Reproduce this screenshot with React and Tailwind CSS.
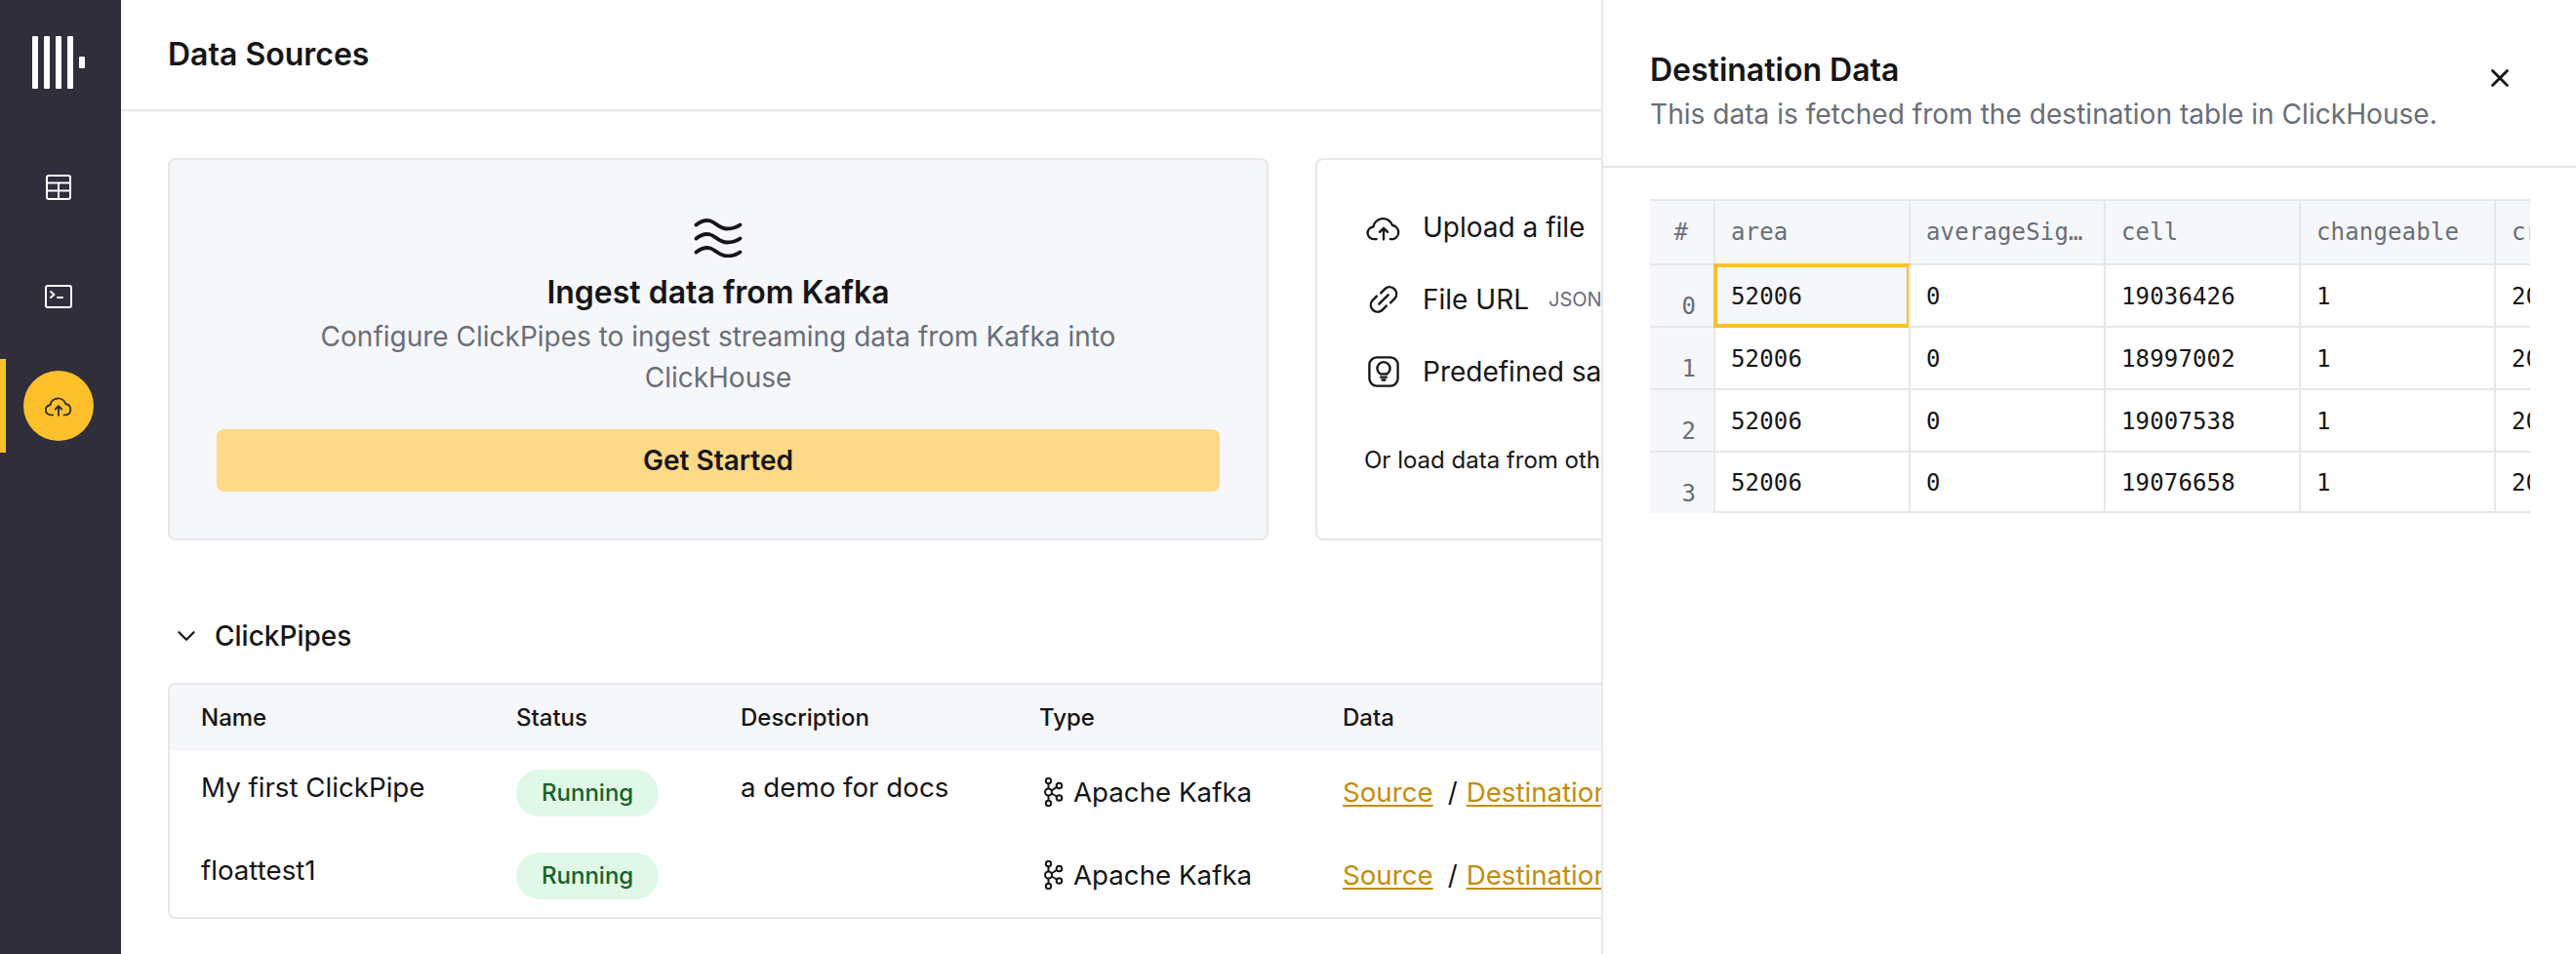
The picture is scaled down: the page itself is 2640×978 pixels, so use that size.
import React from "react";
import { ChevronDown, X } from "lucide-react";

const SANS = "font-['Inter','Liberation_Sans',sans-serif]";
const MONO = "font-['DejaVu_Sans_Mono','Liberation_Mono',monospace]";

const CloudUp = ({ className }) => (
  <svg viewBox="0 0 36 28" fill="none" stroke="currentColor" strokeWidth="2.4" strokeLinecap="round" strokeLinejoin="round" className={className}>
    <path d="M10.500 26H8a6.500 6.500 0 0 1-1-13 10.500 10.500 0 0 1 20.300-1.600A7.500 7.500 0 0 1 28.500 26H25" />
    <path d="M18 26.500V14.500M13.800 18.500l4.200-4.200 4.200 4.200" />
  </svg>
);

const TableIcon = () => (
  <svg viewBox="0 0 26 26" fill="none" stroke="#fff" strokeWidth="2" className="w-[26px] h-[26px]">
    <rect x="1" y="1" width="24" height="24" rx="2" />
    <path d="M1 8.500h24M1 16.500h24M13 8.500V25" />
  </svg>
);

const TerminalIcon = () => (
  <svg viewBox="0 0 28 24" fill="none" stroke="#fff" strokeWidth="2" strokeLinecap="round" strokeLinejoin="round" className="w-[28px] h-[24px]">
    <rect x="1" y="1" width="26" height="22" rx="2" />
    <path d="M6 7l3.500 3L6 13M13 13h5" />
  </svg>
);

const Logo = () => (
  <svg viewBox="0 0 54 54" fill="#fff" className="w-[54px] h-[54px]">
    <rect x="0" y="0" width="6" height="54" rx="1" />
    <rect x="12" y="0" width="6" height="54" rx="1" />
    <rect x="24" y="0" width="6" height="54" rx="1" />
    <rect x="36" y="0" width="6" height="54" rx="1" />
    <rect x="48" y="21" width="6" height="12" rx="1" />
  </svg>
);

const Waves = () => (
  <svg viewBox="0 0 50 40" fill="none" stroke="#161517" strokeWidth="3.800" strokeLinecap="round" className="w-[50px] h-[40px]">
    <path d="M2.500 6.500C7 3 12 1 17 2.500S27 10.500 34 10.500 44 9 47.500 6.500" />
    <path d="M2.500 20.500C7 17 12 15 17 16.500S27 24.500 34 24.500 44 23 47.500 20.500" />
    <path d="M2.500 34.500C7 31 12 29 17 30.500S27 38.500 34 38.500 44 37 47.500 34.500" />
  </svg>
);

const LinkIcon = () => (
  <svg viewBox="0 0 34 34" fill="none" stroke="#161517" strokeWidth="2.500" strokeLinecap="round" strokeLinejoin="round" className="w-8 h-8">
    <path d="M14 10l5-5a7.500 7.500 0 0 1 10.500 10.500l-5 5" />
    <path d="M20 24l-5 5A7.500 7.500 0 0 1 4.500 18.500l5-5" />
    <path d="M12 22l10-10" />
  </svg>
);

const BulbIcon = () => (
  <svg viewBox="0 0 34 34" fill="none" stroke="#161517" strokeWidth="2.500" strokeLinecap="round" strokeLinejoin="round" className="w-8 h-8">
    <rect x="1.500" y="1.500" width="31" height="31" rx="8" />
    <path d="M13.500 19.500a7 7 0 1 1 7 0" />
    <path d="M13.500 19.500h7M14 23h6M15.500 26h3" />
  </svg>
);

const KafkaIcon = () => (
  <svg viewBox="0 0 20 30" fill="none" stroke="#161517" strokeWidth="2" className="w-[20px] h-[30px] shrink-0">
    <circle cx="4.500" cy="3.500" r="2.700" />
    <circle cx="4.500" cy="15" r="3.500" />
    <circle cx="4.500" cy="26.500" r="2.700" />
    <circle cx="15.500" cy="8.500" r="2.800" />
    <circle cx="15.500" cy="21" r="2.800" />
    <path d="M4.500 6.200v5.300M4.500 18.500v5.300M7.600 13.500l5.400-3.600M7.600 16.500l5.400 3" />
  </svg>
);

const Badge = () => (
  <span className="inline-flex items-center h-12 px-[26px] rounded-3xl bg-[#e0f8e7] text-[#14632b] text-2xl font-medium">
    Running
  </span>
);

const pipes = [
  { name: "My first ClickPipe", description: "a demo for docs" },
  { name: "floattest1", description: "" },
];

const columns = [
  { key: "area", label: "area" },
  { key: "avg", label: "averageSignalRange" },
  { key: "cell", label: "cell" },
  { key: "changeable", label: "changeable" },
  { key: "created", label: "created" },
];

const rows = [
  { area: 52006, avg: 0, cell: 19036426, changeable: 1, created: "2021-03-04" },
  { area: 52006, avg: 0, cell: 18997002, changeable: 1, created: "2021-03-04" },
  { area: 52006, avg: 0, cell: 19007538, changeable: 1, created: "2021-03-04" },
  { area: 52006, avg: 0, cell: 19076658, changeable: 1, created: "2021-03-04" },
];

const DataTable = () => (
  <div className={`mx-[50px] w-[902px] h-[322px] overflow-hidden border-t-2 border-[#e6e7e9] ${MONO} text-2xl tracking-[0.15px]`}>
    <div className="flex h-[66px] bg-[#f6f7fa] border-b-2 border-[#e6e7e9] text-[#696e79]">
      <div className="w-[65px] shrink-0 flex items-center justify-end pr-[26px]">#</div>
      {columns.map((c) => (
        <div key={c.key} className="w-[200px] shrink-0 flex items-center px-4 border-l-2 border-[#e6e7e9]">
          <span className="truncate">{c.label}</span>
        </div>
      ))}
    </div>
    {rows.map((row, i) => (
      <div key={i} className={`flex ${i === 3 ? "h-[62px]" : "h-16"}`}>
        <div className={`w-[65px] shrink-0 flex items-end justify-end pr-[18px] pb-1 bg-[#f6f7fa] text-[#696e79] ${i === 3 ? "" : "border-b-2 border-[#e6e7e9]"}`}>{i}</div>
        {columns.map((c, j) => (
          <div
            key={c.key}
            className={`relative w-[200px] shrink-0 flex items-center pt-[2px] px-4 border-l-2 border-b-2 border-[#e6e7e9] text-[#161517] ${i === 0 && j === 0 ? "bg-[#f6f7fa]" : ""}`}
          >
            <span className="truncate">{row[c.key]}</span>
            {i === 0 && j === 0 && (
              <span className="absolute -left-[2px] -top-[2px] -right-[2px] -bottom-[2px] border-4 border-[#fec02b]" />
            )}
          </div>
        ))}
      </div>
    ))}
  </div>
);

const App = () => {
  return (
    <div className={`relative flex w-[2640px] h-[978px] overflow-hidden bg-white text-[#161517] ${SANS}`}>
      <aside className="w-[124px] shrink-0 bg-[#302e3a] flex flex-col">
        <div className="h-[128px] pt-[37px] pr-1 flex justify-center">
          <Logo />
        </div>
        <nav className="pt-4 flex flex-col gap-4">
          <div className="h-24 pr-1 flex items-center justify-center"><TableIcon /></div>
          <div className="h-24 pr-1 flex items-center justify-center"><TerminalIcon /></div>
          <div className="relative h-24 pr-1 flex items-center justify-center">
            <span className="absolute left-0 top-0 bottom-0 w-[6px] bg-[#fec02b]" />
            <span className="w-[72px] h-[72px] rounded-full bg-[#fec02b] flex items-center justify-center text-[#302e3a]">
              <CloudUp className="w-[28px] h-[22px]" />
            </span>
          </div>
        </nav>
      </aside>

      <main className="flex-1 min-w-0">
        <header className="h-[114px] border-b-2 border-[#e6e7e9] flex items-center px-12">
          <h1 className="text-[32px] font-semibold">Data Sources</h1>
        </header>
        <div className="p-12">
          <div className="flex gap-12">
            <section className="w-[1128px] h-[392px] shrink-0 rounded-lg border-2 border-[#e6e7e9] bg-[#f6f7fa] px-12 pt-[60px] flex flex-col items-center">
              <Waves />
              <h2 className="mt-4 text-[32px] leading-10 font-semibold">Ingest data from Kafka</h2>
              <p className="mt-1 w-[860px] text-center text-[28px] leading-[42px] text-[#696e79]">
                Configure ClickPipes to ingest streaming data from Kafka into ClickHouse
              </p>
              <button className="mt-8 w-full h-16 rounded-lg bg-[#fed987] text-[28px] font-semibold">Get Started</button>
            </section>
            <section className="flex-1 h-[392px] rounded-lg border-2 border-[#e6e7e9] px-12 pt-[49px]">
              <div className="flex flex-col gap-[34px]">
                <div className="flex items-center gap-5 h-10">
                  <div className="w-10 flex justify-center"><CloudUp className="w-[36px] h-[27px] text-[#161517]" /></div>
                  <span className="text-[28px]">Upload a file</span>
                </div>
                <div className="flex items-center gap-5 h-10">
                  <div className="w-10 flex justify-center"><LinkIcon /></div>
                  <span className="text-[28px]">File URL</span>
                  <span className="text-[20px] text-[#696e79]">JSON, CSV, TSV and more</span>
                </div>
                <div className="flex items-center gap-5 h-10">
                  <div className="w-10 flex justify-center"><BulbIcon /></div>
                  <span className="text-[28px]">Predefined sample data</span>
                </div>
              </div>
              <p className="mt-[55px] text-2xl">Or load data from other sources</p>
            </section>
          </div>

          <div className="mt-[78px] flex items-center h-10 pl-[4px] gap-[14px]">
            <ChevronDown className="w-[30px] h-[30px]" strokeWidth={1.8} />
            <span className="text-[28px] font-medium">ClickPipes</span>
          </div>

          <div className="mt-[28px] h-[242px] rounded-lg border-2 border-[#e6e7e9] overflow-hidden">
            <div className="flex items-center h-[68px] bg-[#f6f7fa] text-2xl font-medium pl-8">
              <div className="w-[323px]">Name</div>
              <div className="w-[230px]">Status</div>
              <div className="w-[306px]">Description</div>
              <div className="w-[311px]">Type</div>
              <div>Data</div>
            </div>
            {pipes.map((p) => (
              <div key={p.name} className="flex items-center h-[85px] text-[27.7px] pl-8">
                <div className="w-[323px] pb-[10px]">{p.name}</div>
                <div className="w-[230px]"><Badge /></div>
                <div className="w-[306px] pb-[10px]">{p.description}</div>
                <div className="w-[311px] flex items-center gap-[10px] pl-[5px]">
                  <KafkaIcon />
                  <span>Apache Kafka</span>
                </div>
                <div className="flex items-center">
                  <a className="text-[#c48c0a] underline decoration-2 underline-offset-[3px]">Source</a>
                  <span className="ml-[15px] mr-[9px]">/</span>
                  <a className="text-[#c48c0a] underline decoration-2 underline-offset-[3px]">Destination</a>
                </div>
              </div>
            ))}
          </div>
        </div>
      </main>

      {/* drawer sits over the page */}
      <aside className="absolute right-0 top-0 bottom-0 w-[999px] bg-white border-l-2 border-[#e6e7e9]">
        <div className="h-[172px] border-b-2 border-[#e6e7e9] pl-12 pr-[63px] pt-[52px] flex justify-between">
          <div>
            <h2 className="text-[32px] leading-10 font-semibold">Destination Data</h2>
            <p className="mt-[5px] text-[28.1px] leading-10 text-[#696e79]">This data is fetched from the destination table in ClickHouse.</p>
          </div>
          <X className="w-[30px] h-[30px] mt-[13px]" strokeWidth={2.2} />
        </div>
        <div className="pt-8 -ml-[2px]">
          <DataTable />
        </div>
      </aside>
    </div>
  );
};

export default App;
